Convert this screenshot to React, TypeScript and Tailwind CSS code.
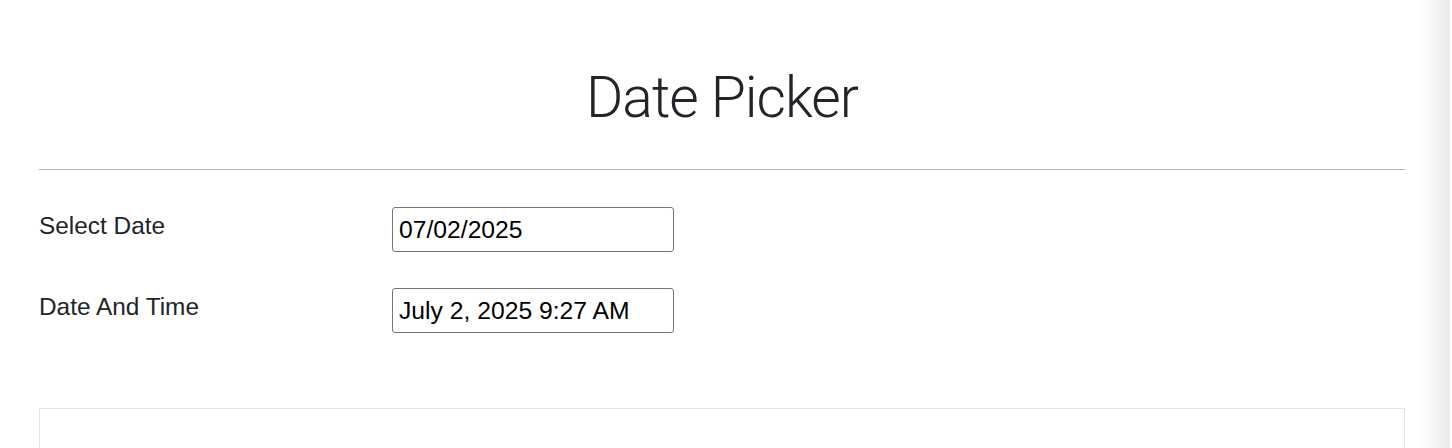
import * as React from "react";

const fields = [
  { label: "Select Date", value: "07/02/2025" },
  { label: "Date And Time", value: "July 2, 2025 9:27 AM" },
];

const App: React.FC = () => {
  return (
    <div className="relative h-[448px] overflow-hidden bg-white">
      <div className="w-[1444px] px-[39px]">
        {/* Title */}
        <div className="pt-[62px] pb-[35px] text-center">
          <h1
            className="text-[57px] font-light leading-[72px] tracking-[-1px] text-[#212529]"
            style={{ fontFamily: "Roboto, 'Liberation Sans', sans-serif" }}
          >
            Date Picker
          </h1>
        </div>
        <hr className="border-0 border-t border-[#b3b3b3]" />

        {/* Form rows */}
        <div
          className="flex flex-col gap-[36px] pt-[37px]"
          style={{ fontFamily: "'Liberation Sans', Arial, sans-serif" }}
        >
          {fields.map((f) => (
            <div key={f.label} className="flex items-start">
              <label className="w-[353px] pt-[5px] text-[24.4px] leading-[28px] text-[#212529]">
                {f.label}
              </label>
              <div className="flex h-[45px] w-[282px] items-center rounded-[3px] border border-[#767676] px-[6px] pt-[1px] text-[24.7px] text-black">
                {f.value}
              </div>
            </div>
          ))}
        </div>

        {/* Bottom panel */}
        <div className="mt-[75px] h-[60px] border border-[#e4e4e4]" />
      </div>

      {/* Scroll shade at the right edge */}
      <div className="pointer-events-none absolute right-[2px] top-0 h-full w-[30px] bg-gradient-to-r from-white to-[#ebebeb]" />
    </div>
  );
};

export default App;
